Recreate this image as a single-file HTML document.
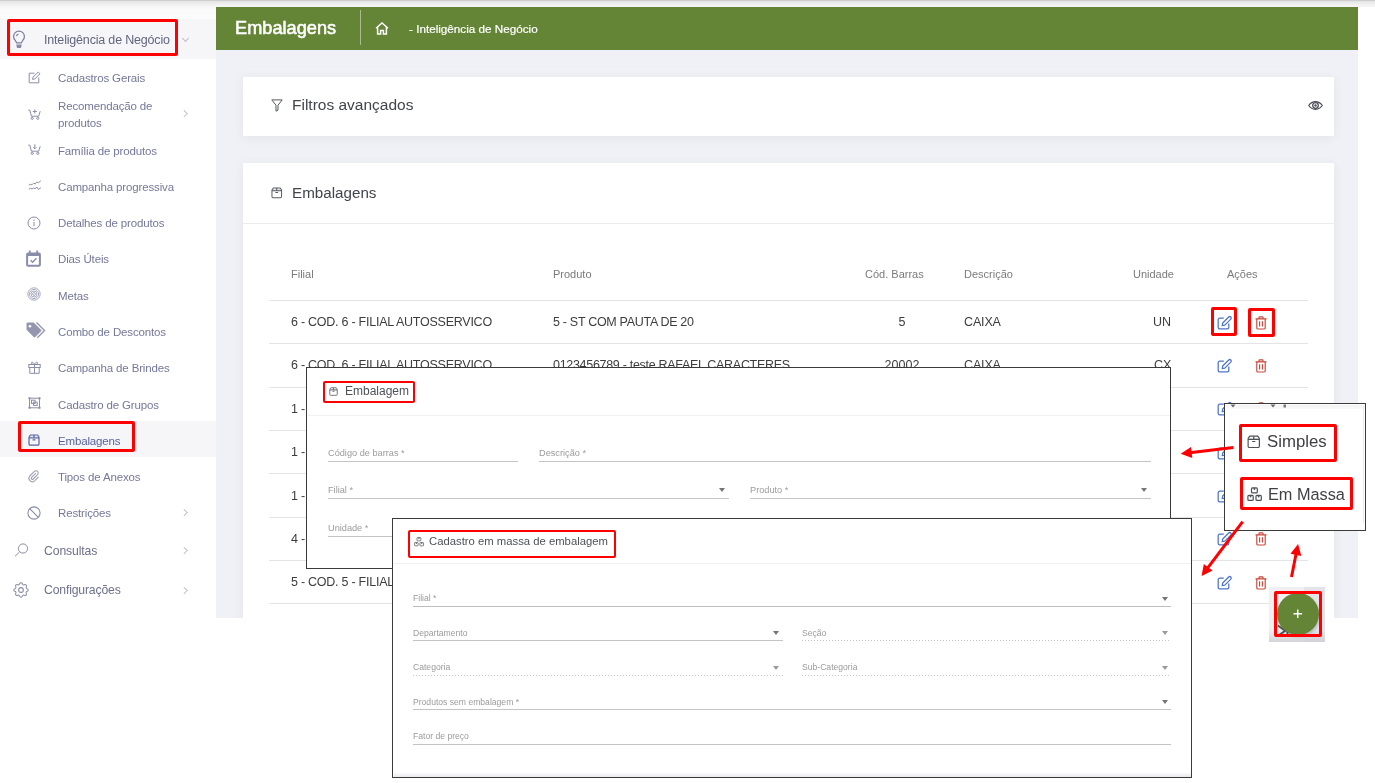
<!DOCTYPE html>
<html><head><meta charset="utf-8">
<style>
*{margin:0;padding:0;box-sizing:border-box}
html,body{width:1375px;height:783px;overflow:hidden;background:#fff;font-family:"Liberation Sans",sans-serif}
.a{position:absolute}
.t{position:absolute;white-space:nowrap;line-height:1;will-change:transform}
svg{position:absolute;overflow:visible}

</style></head><body>
<div class="a" style="left:0px;top:0px;width:1375px;height:7px;background:linear-gradient(#cdcdcd 0,#cdcdcd 1px,#e4e4e4 1px,#efefef 4px,#f7f7f8 7px)"></div>
<div class="a" style="left:0px;top:7px;width:216px;height:12px;background:linear-gradient(#f8f8f9,#fcfcfd)"></div>
<div class="a" style="left:0px;top:19px;width:216px;height:40px;background:#f6f6f9"></div>
<div class="a" style="left:0px;top:421px;width:216px;height:36px;background:#f6f6f9"></div>
<div class="t" style="left:44.20px;top:34.12px;font-size:12.5px;color:#62657f;letter-spacing:-0.18px;">Inteligência de Negócio</div>
<svg style="left:12px;top:30.6px" width="14" height="17.4" viewBox="0 0 14 18"><g fill="none" stroke="#7d809c" stroke-width="1.3"><path d="M4.6 12.3L3 9.6A5.6 5.6 0 1 1 11 9.6L9.4 12.3Z"/><path d="M4.3 5.4A2.8 2.8 0 0 1 6.4 3.2"/></g><path d="M4.2 13.9h5.6l-.5 2.9a.9.9 0 0 1-.9.7H5.6a.9.9 0 0 1-.9-.7z" fill="#7d809c" opacity=".9"/></svg><div class="a" style="left:182.8px;top:36px;width:5px;height:5px;border-right:1px solid #b9bbca;border-bottom:1px solid #b9bbca;transform:rotate(45deg)"></div>
<div class="t" style="left:58.00px;top:73.27px;font-size:11.5px;color:#75789a;letter-spacing:-0.15px;">Cadastros Gerais</div>
<svg style="left:27.5px;top:70.5px" width="13" height="13" viewBox="0 0 13 13"><g fill="none" stroke="#8a8da8" stroke-width="1"><path d="M6.5 2.2H1.2v9.6h9.6V6.5"/><path d="M4.6 8.4l.4-2.2 5.2-5.2 1.8 1.8-5.2 5.2z"/></g></svg><div class="t" style="left:58.00px;top:101.07px;font-size:11.5px;color:#75789a;letter-spacing:-0.15px;">Recomendação de</div>
<svg style="left:27.5px;top:108.5px" width="13" height="11" viewBox="0 0 13 11"><g fill="none" stroke="#8a8da8" stroke-width="1"><path d="M0.3 1.2h1.6l1.5 6h7.3l1.5-5"/><path d="M6.8 0.5v4M4.8 2.5h4"/><circle cx="4.2" cy="9.3" r="1.1"/><circle cx="9.8" cy="9.3" r="1.1"/></g></svg><div class="t" style="left:58.00px;top:118.07px;font-size:11.5px;color:#75789a;letter-spacing:-0.15px;">produtos</div>
<div class="t" style="left:58.00px;top:145.67px;font-size:11.5px;color:#75789a;letter-spacing:-0.15px;">Família de produtos</div>
<svg style="left:27.5px;top:143.8px" width="13" height="11" viewBox="0 0 13 11"><g fill="none" stroke="#8a8da8" stroke-width="1"><path d="M0.3 1.2h1.6l1.5 6h7.3l1.5-5"/><path d="M6.8 0.3v4.5M5.2 3.2l1.6 1.6 1.6-1.6"/><circle cx="4.2" cy="9.3" r="1.1"/><circle cx="9.8" cy="9.3" r="1.1"/></g></svg><div class="t" style="left:58.00px;top:181.77px;font-size:11.5px;color:#75789a;letter-spacing:-0.15px;">Campanha progressiva</div>
<svg style="left:27.5px;top:180px" width="14" height="11" viewBox="0 0 14 11"><g fill="none" stroke="#8a8da8" stroke-width="1" stroke-linejoin="round"><path d="M0.8 5.2L2.4 4.3L4 4.8L5.6 3.2L7.2 3.9L8.8 2.1L10.4 2.7L12.8 0.8"/><path d="M0.8 9.2L2.4 8.3L4 9L5.6 7.9L7.2 8.8L8.8 7L10.4 9.4L12.8 7.8"/></g></svg><div class="t" style="left:58.00px;top:218.07px;font-size:11.5px;color:#75789a;letter-spacing:-0.15px;">Detalhes de produtos</div>
<svg style="left:27px;top:216px" width="14" height="14" viewBox="0 0 14 14"><g fill="none" stroke="#8a8da8" stroke-width="1"><circle cx="7" cy="7" r="6"/><path d="M7 6v4.2"/></g><circle cx="7" cy="4.2" r="0.7" fill="#8a8da8"/></svg><div class="t" style="left:58.00px;top:254.47px;font-size:11.5px;color:#75789a;letter-spacing:-0.15px;">Dias Úteis</div>
<svg style="left:25.5px;top:249.5px" width="15" height="17" viewBox="0 0 15 17"><rect x="1.1" y="3.4" width="12.8" height="12.4" rx="1" fill="none" stroke="#8a8da8" stroke-width="2"/><rect x="1" y="3" width="13" height="3" fill="#8a8da8"/><path d="M3.8 0.5v3.5M11.2 0.5v3.5" stroke="#8a8da8" stroke-width="1.8"/><path d="M4.6 10.2l2 2 3.8-4" fill="none" stroke="#8a8da8" stroke-width="1.4"/></svg><div class="t" style="left:58.00px;top:290.87px;font-size:11.5px;color:#75789a;letter-spacing:-0.15px;">Metas</div>
<svg style="left:27px;top:287px" width="14" height="14" viewBox="0 0 14 14"><g fill="none" stroke="#9ea0b8" stroke-width="0.9"><circle cx="7" cy="7" r="6.2"/><circle cx="7" cy="7" r="4.6"/><circle cx="7" cy="7" r="3"/><circle cx="7" cy="7" r="1.4"/></g></svg><div class="t" style="left:58.00px;top:326.87px;font-size:11.5px;color:#75789a;letter-spacing:-0.15px;">Combo de Descontos</div>
<svg style="left:25.5px;top:322px" width="21" height="17" viewBox="0 0 21 17"><path d="M0.5 1.5v6.2l8 8 7.2-7.2-8-8H1.5z" fill="#9396ae"/><circle cx="4" cy="4.2" r="1.3" fill="#fff"/><path d="M10.5 0.5l8 8-7.2 7.2" fill="none" stroke="#9396ae" stroke-width="1.4"/></svg><div class="t" style="left:58.00px;top:363.17px;font-size:11.5px;color:#75789a;letter-spacing:-0.15px;">Campanha de Brindes</div>
<svg style="left:28px;top:361px" width="13" height="13" viewBox="0 0 13 13"><g fill="none" stroke="#8a8da8" stroke-width="1"><rect x="0.8" y="3.5" width="11.4" height="3"/><path d="M1.8 6.5v5.8h9.4V6.5M6.5 3.5v8.8M6.5 3.5C5.5 1 3.5 0.5 3.5 2s2 1.5 3 1.5C7.5 3.5 9.5 3.5 9.5 2S7.5 1 6.5 3.5"/></g></svg><div class="t" style="left:58.00px;top:399.67px;font-size:11.5px;color:#75789a;letter-spacing:-0.15px;">Cadastro de Grupos</div>
<svg style="left:28px;top:397px" width="13" height="12" viewBox="0 0 13 12"><g fill="none" stroke="#8a8da8" stroke-width="1"><rect x="1.5" y="1.2" width="10" height="9.6"/><rect x="3.5" y="3.2" width="3.6" height="3.2"/><rect x="5.6" y="5.2" width="3.6" height="3.2"/></g><g fill="#8a8da8"><rect x="0.5" y="0.3" width="2" height="2"/><rect x="10.5" y="0.3" width="2" height="2"/><rect x="0.5" y="9.7" width="2" height="2"/><rect x="10.5" y="9.7" width="2" height="2"/></g></svg><div class="t" style="left:58.00px;top:435.57px;font-size:11.5px;color:#56639e;letter-spacing:-0.15px;">Embalagens</div>
<svg style="left:28px;top:434px" width="12" height="12" viewBox="0 0 12 12"><path d="M1.6 2.6h8.8v1.3H1.6z" fill="#56639e" opacity=".35"/><g fill="none" stroke="#56639e" stroke-width="1.2" stroke-linejoin="round"><path d="M1 3.2L2.4 1H9.6L11 3.2V10a1.1 1.1 0 0 1-1.1 1.1H2.1A1.1 1.1 0 0 1 1 10z"/><path d="M1 4H11M6 1v3M4.6 5.8h2.8"/></g></svg><div class="t" style="left:58.00px;top:472.07px;font-size:11.5px;color:#75789a;letter-spacing:-0.15px;">Tipos de Anexos</div>
<svg style="left:28px;top:470px" width="12" height="12" viewBox="0 0 12 12"><path d="M7.8 3.2L3.6 7.4a1.1 1.1 0 0 0 1.6 1.6l4.6-4.6a2.3 2.3 0 0 0-3.2-3.2L1.8 6a3.4 3.4 0 0 0 4.8 4.8l4-4" fill="none" stroke="#a0a2b8" stroke-width="1.1"/></svg><div class="t" style="left:58.00px;top:507.97px;font-size:11.5px;color:#75789a;letter-spacing:-0.15px;">Restrições</div>
<svg style="left:27px;top:505.5px" width="14" height="14" viewBox="0 0 14 14"><g fill="none" stroke="#8a8da8" stroke-width="1.1"><circle cx="7" cy="7" r="6.1"/><path d="M2.7 2.7l8.6 8.6"/></g></svg><div class="t" style="left:44.20px;top:544.67px;font-size:12.2px;color:#6e718c;letter-spacing:-0.1px;">Consultas</div>
<div class="t" style="left:44.20px;top:583.87px;font-size:12.2px;color:#6e718c;letter-spacing:-0.15px;">Configurações</div>
<svg style="left:13.5px;top:543px" width="15" height="14" viewBox="0 0 15 14"><g fill="none" stroke="#8a8da8" stroke-width="1"><circle cx="9" cy="5.5" r="4.6"/><path d="M5.7 8.8L1 13.3"/></g></svg><svg style="left:13.5px;top:583px" width="14" height="14" viewBox="3.2 3.2 17.6 17.6"><g fill="none" stroke="#8a8da8" stroke-width="1.3"><path d="M10.3 4.3c.4-1.8 3-1.8 3.4 0a1.7 1.7 0 0 0 2.6 1.1c1.5-.9 3.3.8 2.4 2.4a1.7 1.7 0 0 0 1 2.5c1.8.4 1.8 3 0 3.4a1.7 1.7 0 0 0-1 2.6c.9 1.5-.9 3.3-2.4 2.4a1.7 1.7 0 0 0-2.6 1c-.4 1.8-3 1.8-3.4 0a1.7 1.7 0 0 0-2.5-1c-1.6.9-3.3-.9-2.4-2.4a1.7 1.7 0 0 0-1.1-2.6c-1.8-.4-1.8-3 0-3.4a1.7 1.7 0 0 0 1.1-2.5c-.9-1.6.8-3.3 2.4-2.4 1 .6 2.3.1 2.5-1.1z"/><circle cx="12" cy="12" r="3"/></g></svg><div class="a" style="left:181.8px;top:111.45px;width:4.5px;height:4.5px;border-right:1px solid #bfc1cf;border-top:1px solid #bfc1cf;transform:rotate(45deg)"></div>
<div class="a" style="left:181.8px;top:509.55px;width:4.5px;height:4.5px;border-right:1px solid #bfc1cf;border-top:1px solid #bfc1cf;transform:rotate(45deg)"></div>
<div class="a" style="left:181.8px;top:547.95px;width:4.5px;height:4.5px;border-right:1px solid #bfc1cf;border-top:1px solid #bfc1cf;transform:rotate(45deg)"></div>
<div class="a" style="left:181.8px;top:587.75px;width:4.5px;height:4.5px;border-right:1px solid #bfc1cf;border-top:1px solid #bfc1cf;transform:rotate(45deg)"></div>
<div class="a" style="left:18px;top:421px;width:117px;height:31px;border:3px solid #f00;border-radius:2px"></div>
<div class="a" style="left:7px;top:19px;width:171px;height:37px;border:3px solid #f00;border-radius:2px"></div>
<div class="a" style="left:0;top:0;width:1375px;height:618px;overflow:hidden">
<div class="a" style="left:216px;top:7px;width:1142px;height:611px;background:#f0f1f6"></div>
<div class="a" style="left:216px;top:7px;width:1142px;height:42.5px;background:#658536"></div>
<div class="t" style="left:234.50px;top:19.39px;font-size:18.2px;color:#fff;letter-spacing:0px;-webkit-text-stroke:0.55px #fff;">Embalagens</div>
<div class="a" style="left:360px;top:10px;width:1px;height:35px;background:rgba(255,255,255,.45)"></div>
<svg style="left:374.5px;top:21.5px" width="14" height="13" viewBox="0 0 14 13"><g fill="none" stroke="#fff" stroke-width="1.5"><path d="M1 6.2L7 1l6 5.2M2.6 5v7h3V8.5h2.8V12h3V5"/></g></svg><div class="t" style="left:409.00px;top:22.80px;font-size:11.7px;color:#fff;-webkit-text-stroke:0.2px #fff;">- Inteligência de Negócio</div>
<div class="a" style="left:243px;top:77px;width:1091px;height:59px;background:#fff;box-shadow:0 2px 10px rgba(70,70,110,.07)"></div>
<div class="a" style="left:243px;top:163px;width:1091px;height:455px;background:#fff;box-shadow:0 2px 10px rgba(70,70,110,.07)"></div>
<div class="t" style="left:291.90px;top:97.18px;font-size:15.5px;color:#42454d;letter-spacing:0px;">Filtros avançados</div>
<svg style="left:271px;top:99px" width="12" height="13" viewBox="0 0 12 13"><g fill="none" stroke="#55585f" stroke-width="1" stroke-linejoin="round"><path d="M0.8 0.9h10.4L7 6.2v4.9L5 12.2V6.2z"/></g></svg><svg style="left:1307.5px;top:101px" width="15" height="9" viewBox="0 0 15 9"><path d="M0.7 4.5C3 1.3 5 0.7 7.5 0.7S12 1.3 14.3 4.5C12 7.7 10 8.3 7.5 8.3S3 7.7 0.7 4.5z" fill="none" stroke="#4b4e57" stroke-width="1.2" stroke-linejoin="round"/><circle cx="7.5" cy="4.5" r="2.8" fill="none" stroke="#4b4e57" stroke-width="1.3"/><circle cx="7.5" cy="4.5" r="1.2" fill="#4b4e57"/></svg><div class="t" style="left:291.70px;top:184.53px;font-size:15.2px;color:#42454d;">Embalagens</div>
<svg style="left:271px;top:186.5px" width="11.5" height="11.5" viewBox="0 0 12 12"><path d="M1.6 2.6h8.8v1.3H1.6z" fill="#5a5d66" opacity=".35"/><g fill="none" stroke="#5a5d66" stroke-width="1.05" stroke-linejoin="round"><path d="M1 3.2L2.4 1H9.6L11 3.2V10a1.1 1.1 0 0 1-1.1 1.1H2.1A1.1 1.1 0 0 1 1 10z"/><path d="M1 4H11M6 1v3M4.6 5.8h2.8"/></g></svg><div class="a" style="left:243px;top:223px;width:1091px;height:1px;background:#ececef"></div>
<div class="t" style="left:291.20px;top:268.69px;font-size:11px;color:#7b7b7b;">Filial</div>
<div class="t" style="left:553.30px;top:268.69px;font-size:11px;color:#7b7b7b;">Produto</div>
<div class="t" style="right:451px;top:268.69px;font-size:11px;color:#7b7b7b">Cód. Barras</div>
<div class="t" style="left:964.00px;top:268.69px;font-size:11px;color:#7b7b7b;">Descrição</div>
<div class="t" style="right:200.5999999999999px;top:268.69px;font-size:11px;color:#7b7b7b">Unidade</div>
<div class="t" style="left:1226.70px;top:268.69px;font-size:11px;color:#7b7b7b;">Ações</div>
<div class="a" style="left:269px;top:300px;width:1039px;height:1px;background:#e4e4e7"></div>
<div class="a" style="left:269px;top:343px;width:1039px;height:1px;background:#e4e4e7"></div>
<div class="a" style="left:269px;top:387px;width:1039px;height:1px;background:#e4e4e7"></div>
<div class="a" style="left:269px;top:430px;width:1039px;height:1px;background:#e4e4e7"></div>
<div class="a" style="left:269px;top:473px;width:1039px;height:1px;background:#e4e4e7"></div>
<div class="a" style="left:269px;top:517px;width:1039px;height:1px;background:#e4e4e7"></div>
<div class="a" style="left:269px;top:560px;width:1039px;height:1px;background:#e4e4e7"></div>
<div class="a" style="left:269px;top:603px;width:1039px;height:1px;background:#e4e4e7"></div>
<div class="t" style="left:291.20px;top:316.12px;font-size:12.5px;color:#3d3d3d;letter-spacing:-0.25px;">6 - COD. 6 - FILIAL AUTOSSERVICO</div>
<div class="t" style="left:553.30px;top:316.12px;font-size:12.5px;color:#3d3d3d;letter-spacing:-0.3px;">5 - ST COM PAUTA DE 20</div>
<div class="t" style="left:862px;width:80px;text-align:center;top:316.12px;font-size:12.5px;color:#3d3d3d">5</div>
<div class="t" style="left:964.00px;top:316.12px;font-size:12.5px;color:#3d3d3d;letter-spacing:-0.15px;">CAIXA</div>
<div class="t" style="right:203.5px;top:316.12px;font-size:12.5px;color:#3d3d3d">UN</div>
<svg style="left:1216.5px;top:315.50px" width="16" height="14" viewBox="0 0 16 14"><g fill="none" stroke="#4f74c9" stroke-width="1.25" stroke-linejoin="round"><path d="M6.8 2.2H2.6A1.4 1.4 0 0 0 1.2 3.6v7.8a1.4 1.4 0 0 0 1.4 1.4h7.8a1.4 1.4 0 0 0 1.4-1.4V7.4"/><path d="M5.2 9.6l.5-2.6 6-6a1.4 1.4 0 0 1 2.1 2.1l-6 6z"/></g></svg><svg style="left:1254.5px;top:315.50px" width="12" height="14" viewBox="0 0 12 14"><g fill="none" stroke="#c7463a" stroke-width="1.15" stroke-linejoin="round"><path d="M0.5 2.8h11M4 2.6V1.6a.8.8 0 0 1 .8-.8h2.4a.8.8 0 0 1 .8.8v1M1.8 2.8v9.1a1.1 1.1 0 0 0 1.1 1.1h6.2a1.1 1.1 0 0 0 1.1-1.1V2.8M4.6 5.2v5.4M7.4 5.2v5.4"/></g></svg><div class="t" style="left:291.20px;top:359.49px;font-size:12.5px;color:#3d3d3d;letter-spacing:-0.25px;">6 - COD. 6 - FILIAL AUTOSSERVICO</div>
<div class="t" style="left:553.30px;top:359.49px;font-size:12.5px;color:#3d3d3d;letter-spacing:-0.3px;">0123456789 - teste RAFAEL CARACTERES</div>
<div class="t" style="left:862px;width:80px;text-align:center;top:359.49px;font-size:12.5px;color:#3d3d3d">20002</div>
<div class="t" style="left:964.00px;top:359.49px;font-size:12.5px;color:#3d3d3d;letter-spacing:-0.15px;">CAIXA</div>
<div class="t" style="right:203.5px;top:359.49px;font-size:12.5px;color:#3d3d3d">CX</div>
<svg style="left:1216.5px;top:358.87px" width="16" height="14" viewBox="0 0 16 14"><g fill="none" stroke="#4f74c9" stroke-width="1.25" stroke-linejoin="round"><path d="M6.8 2.2H2.6A1.4 1.4 0 0 0 1.2 3.6v7.8a1.4 1.4 0 0 0 1.4 1.4h7.8a1.4 1.4 0 0 0 1.4-1.4V7.4"/><path d="M5.2 9.6l.5-2.6 6-6a1.4 1.4 0 0 1 2.1 2.1l-6 6z"/></g></svg><svg style="left:1254.5px;top:358.87px" width="12" height="14" viewBox="0 0 12 14"><g fill="none" stroke="#c7463a" stroke-width="1.15" stroke-linejoin="round"><path d="M0.5 2.8h11M4 2.6V1.6a.8.8 0 0 1 .8-.8h2.4a.8.8 0 0 1 .8.8v1M1.8 2.8v9.1a1.1 1.1 0 0 0 1.1 1.1h6.2a1.1 1.1 0 0 0 1.1-1.1V2.8M4.6 5.2v5.4M7.4 5.2v5.4"/></g></svg><div class="t" style="left:291.20px;top:402.86px;font-size:12.5px;color:#3d3d3d;letter-spacing:-0.25px;">1 - COD. 1 - FILIAL</div>
<svg style="left:1216.5px;top:402.24px" width="16" height="14" viewBox="0 0 16 14"><g fill="none" stroke="#4f74c9" stroke-width="1.25" stroke-linejoin="round"><path d="M6.8 2.2H2.6A1.4 1.4 0 0 0 1.2 3.6v7.8a1.4 1.4 0 0 0 1.4 1.4h7.8a1.4 1.4 0 0 0 1.4-1.4V7.4"/><path d="M5.2 9.6l.5-2.6 6-6a1.4 1.4 0 0 1 2.1 2.1l-6 6z"/></g></svg><svg style="left:1254.5px;top:402.24px" width="12" height="14" viewBox="0 0 12 14"><g fill="none" stroke="#c7463a" stroke-width="1.15" stroke-linejoin="round"><path d="M0.5 2.8h11M4 2.6V1.6a.8.8 0 0 1 .8-.8h2.4a.8.8 0 0 1 .8.8v1M1.8 2.8v9.1a1.1 1.1 0 0 0 1.1 1.1h6.2a1.1 1.1 0 0 0 1.1-1.1V2.8M4.6 5.2v5.4M7.4 5.2v5.4"/></g></svg><div class="t" style="left:291.20px;top:446.23px;font-size:12.5px;color:#3d3d3d;letter-spacing:-0.25px;">1 - COD. 1 - FILIAL</div>
<svg style="left:1216.5px;top:445.61px" width="16" height="14" viewBox="0 0 16 14"><g fill="none" stroke="#4f74c9" stroke-width="1.25" stroke-linejoin="round"><path d="M6.8 2.2H2.6A1.4 1.4 0 0 0 1.2 3.6v7.8a1.4 1.4 0 0 0 1.4 1.4h7.8a1.4 1.4 0 0 0 1.4-1.4V7.4"/><path d="M5.2 9.6l.5-2.6 6-6a1.4 1.4 0 0 1 2.1 2.1l-6 6z"/></g></svg><svg style="left:1254.5px;top:445.61px" width="12" height="14" viewBox="0 0 12 14"><g fill="none" stroke="#c7463a" stroke-width="1.15" stroke-linejoin="round"><path d="M0.5 2.8h11M4 2.6V1.6a.8.8 0 0 1 .8-.8h2.4a.8.8 0 0 1 .8.8v1M1.8 2.8v9.1a1.1 1.1 0 0 0 1.1 1.1h6.2a1.1 1.1 0 0 0 1.1-1.1V2.8M4.6 5.2v5.4M7.4 5.2v5.4"/></g></svg><div class="t" style="left:291.20px;top:489.60px;font-size:12.5px;color:#3d3d3d;letter-spacing:-0.25px;">1 - COD. 1 - FILIAL</div>
<svg style="left:1216.5px;top:488.98px" width="16" height="14" viewBox="0 0 16 14"><g fill="none" stroke="#4f74c9" stroke-width="1.25" stroke-linejoin="round"><path d="M6.8 2.2H2.6A1.4 1.4 0 0 0 1.2 3.6v7.8a1.4 1.4 0 0 0 1.4 1.4h7.8a1.4 1.4 0 0 0 1.4-1.4V7.4"/><path d="M5.2 9.6l.5-2.6 6-6a1.4 1.4 0 0 1 2.1 2.1l-6 6z"/></g></svg><svg style="left:1254.5px;top:488.98px" width="12" height="14" viewBox="0 0 12 14"><g fill="none" stroke="#c7463a" stroke-width="1.15" stroke-linejoin="round"><path d="M0.5 2.8h11M4 2.6V1.6a.8.8 0 0 1 .8-.8h2.4a.8.8 0 0 1 .8.8v1M1.8 2.8v9.1a1.1 1.1 0 0 0 1.1 1.1h6.2a1.1 1.1 0 0 0 1.1-1.1V2.8M4.6 5.2v5.4M7.4 5.2v5.4"/></g></svg><div class="t" style="left:291.20px;top:532.97px;font-size:12.5px;color:#3d3d3d;letter-spacing:-0.25px;">4 - COD. 4 - FILIAL</div>
<svg style="left:1216.5px;top:532.35px" width="16" height="14" viewBox="0 0 16 14"><g fill="none" stroke="#4f74c9" stroke-width="1.25" stroke-linejoin="round"><path d="M6.8 2.2H2.6A1.4 1.4 0 0 0 1.2 3.6v7.8a1.4 1.4 0 0 0 1.4 1.4h7.8a1.4 1.4 0 0 0 1.4-1.4V7.4"/><path d="M5.2 9.6l.5-2.6 6-6a1.4 1.4 0 0 1 2.1 2.1l-6 6z"/></g></svg><svg style="left:1254.5px;top:532.35px" width="12" height="14" viewBox="0 0 12 14"><g fill="none" stroke="#c7463a" stroke-width="1.15" stroke-linejoin="round"><path d="M0.5 2.8h11M4 2.6V1.6a.8.8 0 0 1 .8-.8h2.4a.8.8 0 0 1 .8.8v1M1.8 2.8v9.1a1.1 1.1 0 0 0 1.1 1.1h6.2a1.1 1.1 0 0 0 1.1-1.1V2.8M4.6 5.2v5.4M7.4 5.2v5.4"/></g></svg><div class="t" style="left:291.20px;top:576.34px;font-size:12.5px;color:#3d3d3d;letter-spacing:-0.25px;">5 - COD. 5 - FILIAL AUTOSSERVICO</div>
<svg style="left:1216.5px;top:575.72px" width="16" height="14" viewBox="0 0 16 14"><g fill="none" stroke="#4f74c9" stroke-width="1.25" stroke-linejoin="round"><path d="M6.8 2.2H2.6A1.4 1.4 0 0 0 1.2 3.6v7.8a1.4 1.4 0 0 0 1.4 1.4h7.8a1.4 1.4 0 0 0 1.4-1.4V7.4"/><path d="M5.2 9.6l.5-2.6 6-6a1.4 1.4 0 0 1 2.1 2.1l-6 6z"/></g></svg><svg style="left:1254.5px;top:575.72px" width="12" height="14" viewBox="0 0 12 14"><g fill="none" stroke="#c7463a" stroke-width="1.15" stroke-linejoin="round"><path d="M0.5 2.8h11M4 2.6V1.6a.8.8 0 0 1 .8-.8h2.4a.8.8 0 0 1 .8.8v1M1.8 2.8v9.1a1.1 1.1 0 0 0 1.1 1.1h6.2a1.1 1.1 0 0 0 1.1-1.1V2.8M4.6 5.2v5.4M7.4 5.2v5.4"/></g></svg></div>
<div class="a" style="left:1211px;top:307px;width:26px;height:29px;border:3px solid #f00;border-radius:2px"></div>
<div class="a" style="left:1248px;top:308px;width:27px;height:29px;border:3px solid #f00;border-radius:2px"></div>
<div class="a" style="left:306px;top:367px;width:865px;height:201.5px;background:#fff;border:1.5px solid #3a3a3a"></div>
<div class="a" style="left:307.5px;top:415px;width:862px;height:1px;background:#f0f0f2"></div>
<div class="a" style="left:322.5px;top:380.5px;width:92.5px;height:22.5px;border:2.5px solid #f00;border-radius:2px"></div>
<svg style="left:329px;top:387px" width="9" height="9" viewBox="0 0 12 12"><path d="M1.6 2.6h8.8v1.3H1.6z" fill="#62656d" opacity=".35"/><g fill="none" stroke="#62656d" stroke-width="1.15" stroke-linejoin="round"><path d="M1 3.2L2.4 1H9.6L11 3.2V10a1.1 1.1 0 0 1-1.1 1.1H2.1A1.1 1.1 0 0 1 1 10z"/><path d="M1 4H11M6 1v3M4.6 5.8h2.8"/></g></svg>
<div class="t" style="left:345.40px;top:385.24px;font-size:12px;color:#4e5159;letter-spacing:0px;">Embalagem</div>
<div class="t" style="left:328.00px;top:448.91px;font-size:9.2px;color:#9b9b9b;">Código de barras *</div>
<div class="a" style="left:328px;top:461px;width:190px;height:1px;background:#c4c4c4"></div>
<div class="t" style="left:539.20px;top:448.91px;font-size:9.2px;color:#9b9b9b;">Descrição *</div>
<div class="a" style="left:539px;top:461px;width:612px;height:1px;background:#c4c4c4"></div>
<div class="t" style="left:328.00px;top:485.71px;font-size:9.2px;color:#9b9b9b;">Filial *</div>
<div class="a" style="left:328px;top:498px;width:401px;height:1px;background:#c4c4c4"></div>
<div class="a" style="left:719px;top:488px;width:0;height:0;border-left:3.8px solid transparent;border-right:3.8px solid transparent;border-top:4px solid #757575"></div>
<div class="t" style="left:750.30px;top:485.71px;font-size:9.2px;color:#9b9b9b;">Produto *</div>
<div class="a" style="left:750px;top:498px;width:401px;height:1px;background:#c4c4c4"></div>
<div class="a" style="left:1141px;top:488px;width:0;height:0;border-left:3.8px solid transparent;border-right:3.8px solid transparent;border-top:4px solid #757575"></div>
<div class="t" style="left:328.00px;top:523.91px;font-size:9.2px;color:#9b9b9b;">Unidade *</div>
<div class="a" style="left:328px;top:536px;width:190px;height:1px;background:#c4c4c4"></div>
<div class="a" style="left:392px;top:518px;width:800px;height:260px;background:#fff;border:1.5px solid #3a3a3a"></div>
<div class="a" style="left:393.5px;top:563px;width:797px;height:1px;background:#f0f0f2"></div>
<div class="a" style="left:393.5px;top:772px;width:797px;height:4.5px;background:linear-gradient(#fff,#e9e9ee)"></div>
<div class="a" style="left:407.5px;top:529.5px;width:208.5px;height:28px;border:2.5px solid #f00;border-radius:2px"></div>
<svg style="left:413.8px;top:536.5px" width="10" height="9.33" viewBox="0 0 15 14"><rect x="4.5" y="0.9" width="5.8" height="4.9" rx="0.9" fill="none" stroke="#5b5e66" stroke-width="1.2"/><path d="M6.50 0.9h1.8v1.2a.9.9 0 0 1-1.8 0z" fill="#5b5e66"/><rect x="0.9" y="8.3" width="5.3" height="5.0" rx="0.9" fill="none" stroke="#5b5e66" stroke-width="1.2"/><path d="M2.65 8.3h1.8v1.2a.9.9 0 0 1-1.8 0z" fill="#5b5e66"/><rect x="9.0" y="8.3" width="5.3" height="5.0" rx="0.9" fill="none" stroke="#5b5e66" stroke-width="1.2"/><path d="M10.75 8.3h1.8v1.2a.9.9 0 0 1-1.8 0z" fill="#5b5e66"/></svg>
<div class="t" style="left:429.20px;top:536.03px;font-size:11.3px;color:#4e5159;">Cadastro em massa de embalagem</div>
<div class="t" style="left:413.30px;top:594.22px;font-size:8.6px;color:#9b9b9b;">Filial *</div>
<div class="a" style="left:413px;top:605.5px;width:758px;height:1px;background:#bdbdbd"></div>
<div class="a" style="left:1161.5px;top:596.5px;width:0;height:0;border-left:3.8px solid transparent;border-right:3.8px solid transparent;border-top:4px solid #757575"></div>
<div class="t" style="left:413.30px;top:628.72px;font-size:8.6px;color:#9b9b9b;">Departamento</div>
<div class="a" style="left:413px;top:640px;width:369.5px;height:1px;background:#c4c4c4"></div>
<div class="a" style="left:773px;top:631px;width:0;height:0;border-left:3.8px solid transparent;border-right:3.8px solid transparent;border-top:4px solid #757575"></div>
<div class="t" style="left:802.00px;top:628.72px;font-size:8.6px;color:#9b9b9b;">Seção</div>
<div class="a" style="left:802px;top:640px;width:369px;height:1px;background-image:linear-gradient(90deg,#c8c8c8 50%,transparent 50%);background-size:3px 1px"></div>
<div class="a" style="left:1161.5px;top:631px;width:0;height:0;border-left:3.8px solid transparent;border-right:3.8px solid transparent;border-top:4px solid #9a9a9a"></div>
<div class="t" style="left:413.30px;top:663.42px;font-size:8.6px;color:#9b9b9b;">Categoria</div>
<div class="a" style="left:413px;top:674.5px;width:369.5px;height:1px;background-image:linear-gradient(90deg,#c8c8c8 50%,transparent 50%);background-size:3px 1px"></div>
<div class="a" style="left:773px;top:665.5px;width:0;height:0;border-left:3.8px solid transparent;border-right:3.8px solid transparent;border-top:4px solid #9a9a9a"></div>
<div class="t" style="left:802.00px;top:663.42px;font-size:8.6px;color:#9b9b9b;">Sub-Categoria</div>
<div class="a" style="left:802px;top:674.5px;width:369px;height:1px;background-image:linear-gradient(90deg,#c8c8c8 50%,transparent 50%);background-size:3px 1px"></div>
<div class="a" style="left:1161.5px;top:665.5px;width:0;height:0;border-left:3.8px solid transparent;border-right:3.8px solid transparent;border-top:4px solid #9a9a9a"></div>
<div class="t" style="left:413.30px;top:697.92px;font-size:8.6px;color:#9b9b9b;">Produtos sem embalagem *</div>
<div class="a" style="left:413px;top:708.5px;width:758px;height:1px;background:#c4c4c4"></div>
<div class="a" style="left:1161.5px;top:700px;width:0;height:0;border-left:3.8px solid transparent;border-right:3.8px solid transparent;border-top:4px solid #757575"></div>
<div class="t" style="left:413.30px;top:732.32px;font-size:8.6px;color:#9b9b9b;">Fator de preço</div>
<div class="a" style="left:413px;top:743.5px;width:758px;height:1px;background:#c4c4c4"></div>
<div class="a" style="left:1224px;top:403px;width:142px;height:127.5px;background:#fff;border:1.5px solid #3a3a3a"></div>
<div class="a" style="left:1225.5px;top:404.5px;width:139px;height:4px;background:linear-gradient(#f2f2f4,#fafafa)"></div>
<div class="a" style="left:1362.5px;top:405px;width:1.5px;height:118px;background:#ececf0"></div>
<svg style="left:1225px;top:403px" width="80" height="8" viewBox="0 0 80 8"><path d="M5.5 1.5h5l-2.5 3z M45.5 1.5h5l-2.5 3z" fill="#6a6a6a"/><rect x="58.5" y="1.5" width="2.5" height="3" fill="#777"/></svg>
<div class="a" style="left:1238.5px;top:423.5px;width:98px;height:38px;border:3px solid #f00;border-radius:2px"></div>
<svg style="left:1247.2px;top:434.8px" width="13.5" height="13.5" viewBox="0 0 12 12"><path d="M1.6 2.6h8.8v1.3H1.6z" fill="#4e5057" opacity=".35"/><g fill="none" stroke="#4e5057" stroke-width="1.05" stroke-linejoin="round"><path d="M1 3.2L2.4 1H9.6L11 3.2V10a1.1 1.1 0 0 1-1.1 1.1H2.1A1.1 1.1 0 0 1 1 10z"/><path d="M1 4H11M6 1v3M4.6 5.8h2.8"/></g></svg>
<div class="t" style="left:1267.40px;top:433.78px;font-size:16.8px;color:#3f4147;">Simples</div>
<div class="a" style="left:1239.5px;top:477px;width:113px;height:32.5px;border:3px solid #f00;border-radius:2px"></div>
<svg style="left:1246.5px;top:486.5px" width="15" height="14.00" viewBox="0 0 15 14"><rect x="4.5" y="0.9" width="5.8" height="4.9" rx="0.9" fill="none" stroke="#4e5057" stroke-width="1.2"/><path d="M6.50 0.9h1.8v1.2a.9.9 0 0 1-1.8 0z" fill="#4e5057"/><rect x="0.9" y="8.3" width="5.3" height="5.0" rx="0.9" fill="none" stroke="#4e5057" stroke-width="1.2"/><path d="M2.65 8.3h1.8v1.2a.9.9 0 0 1-1.8 0z" fill="#4e5057"/><rect x="9.0" y="8.3" width="5.3" height="5.0" rx="0.9" fill="none" stroke="#4e5057" stroke-width="1.2"/><path d="M10.75 8.3h1.8v1.2a.9.9 0 0 1-1.8 0z" fill="#4e5057"/></svg>
<div class="t" style="left:1268.00px;top:486.20px;font-size:16.3px;color:#3f4147;">Em Massa</div>
<div class="a" style="left:1269px;top:587px;width:56px;height:54.5px;background:linear-gradient(90deg,#eef0f1 0,#eef0f1 62%,#e3e4e9 62%);"></div>
<div class="a" style="left:1269px;top:630px;width:56px;height:11.5px;background:linear-gradient(rgba(220,220,225,0),rgba(205,205,210,.8))"></div>
<svg style="left:1276px;top:624px" width="16" height="14" viewBox="0 0 16 14"><path d="M1.8 1.5l7.5 5.2-7.5 5.2M11.5 5v8" fill="none" stroke="#555" stroke-width="2"/></svg>
<div class="a" style="left:1276.8px;top:592.7px;width:42px;height:42px;border-radius:50%;background:#658536;box-shadow:1px 2px 3px rgba(0,0,0,.18)"></div>
<svg style="left:1293px;top:609px" width="9.5" height="9.5" viewBox="0 0 10 10"><path d="M5 0.5v9M0.5 5h9" stroke="#fff" stroke-width="1.5"/></svg>
<div class="a" style="left:1273.5px;top:591px;width:48px;height:46px;border:3px solid #f00;border-radius:2px"></div>
<svg style="left:0;top:0" width="1375" height="783" viewBox="0 0 1375 783"><line x1="1233.4" y1="447.5" x2="1189.6" y2="452.7" stroke="#f00" stroke-width="3"/><polygon points="1180.7,453.8 1191.0,447.0 1192.3,458.0" fill="#f00"/><line x1="1242.7" y1="521.6" x2="1207.0" y2="568.9" stroke="#f00" stroke-width="3"/><polygon points="1201.6,576.1 1203.8,564.0 1212.6,570.6" fill="#f00"/><line x1="1291.5" y1="577" x2="1296.3" y2="552.8" stroke="#f00" stroke-width="3"/><polygon points="1298.1,544.0 1301.3,555.9 1290.5,553.7" fill="#f00"/></svg>
</body></html>
